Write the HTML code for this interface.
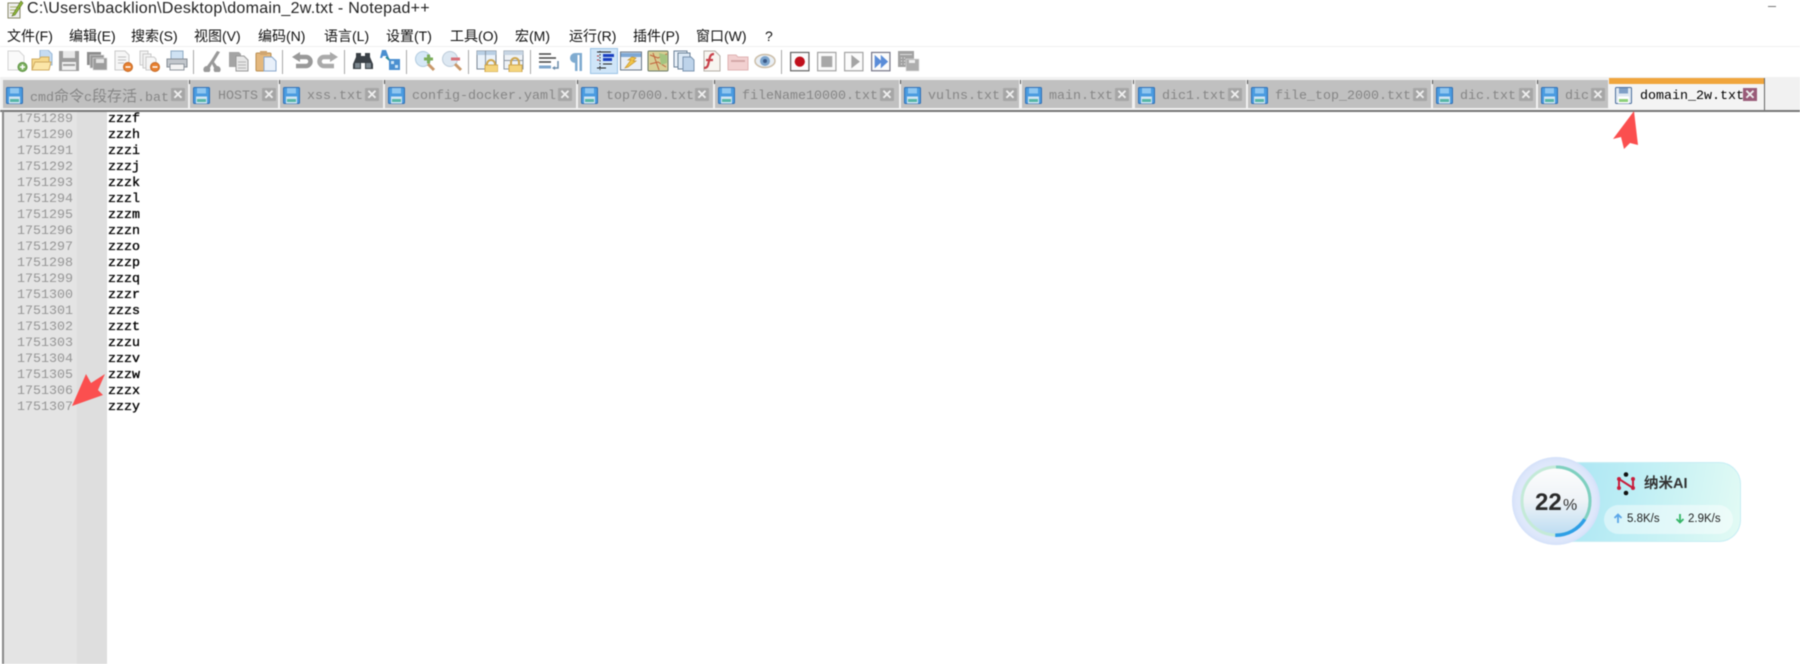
<!DOCTYPE html>
<html><head><meta charset="utf-8"><style>
html,body{margin:0;padding:0;background:#fff}
body{width:1800px;height:664px;overflow:hidden;position:relative;font-family:"Liberation Sans","Noto Sans CJK SC",sans-serif}
#w{position:absolute;left:0;top:0;width:1800px;height:664px;overflow:hidden;filter:blur(.5px)}
.a{position:absolute;white-space:nowrap}
.m{position:absolute;top:27px;font-size:14px;line-height:18px;color:#111;white-space:nowrap}
.t{position:absolute;top:80px;height:28px;background:#c0c0c0}
.t:after{content:"";position:absolute;right:-2px;top:0;width:1px;height:4px;background:#555}
.t svg{position:absolute;left:3px;top:7px;width:17px;height:17px}
.t b{position:absolute;top:8px;font:400 13.33px/18px "Liberation Mono","Noto Sans CJK SC",monospace;color:#868686;white-space:nowrap}
.t b i{font-style:normal;font-size:15px;font-family:"Noto Sans CJK SC",sans-serif}
.t u{position:absolute;top:8px;width:14px;height:13px;background:#a6a6a6;border-radius:1px;color:#eee;text-decoration:none;font:700 13px/13px "Liberation Sans",sans-serif;text-align:center}
.i{position:absolute;top:50px;width:22px;height:22px}
.s{position:absolute;top:50px;width:1px;height:24px;background:#a8a8a8}
.n,.c{position:absolute;font:13.33px/16px "Liberation Mono",monospace;white-space:pre}
.n{left:17px;top:112px;color:#969696}
.c{left:108px;top:112px;color:#000;-webkit-text-stroke:.35px #000}
</style></head><body><div id="w">
<svg width="0" height="0" style="position:absolute"><symbol id="fd" viewBox="0 0 17 17"><rect x=".5" y=".5" width="16" height="16" rx="1" fill="#4a9be0" stroke="#2f6fb5"/><rect x="4" y="1" width="9" height="5.5" fill="#8fc6f0"/><rect x="3" y="9.5" width="11" height="7" fill="#d0e4f2"/><rect x="4" y="12" width="9" height="3" fill="#56b6a6"/></symbol></svg>

<svg class="a" style="left:6px;top:0" width="18" height="19" viewBox="0 0 18 19"><path d="M2 3h12v15H2z" fill="#eee" stroke="#8a8a6a"/><path d="M4 7h8M4 10h8M4 13h6" stroke="#a9b06a"/><path d="M7 14L15 1l2 2-8 12-3 1z" fill="#8eb83a" stroke="#566c1e" stroke-width=".6"/></svg>
<div class="a" style="left:27px;top:0;font-size:16px;line-height:18px;color:#222;letter-spacing:.28px">C:\Users\backlion\Desktop\domain_2w.txt - Notepad++</div>
<div class="a" style="left:1768px;top:6px;width:8px;height:1px;background:#777"></div>

<div class="m" style="left:7px">文件(F)</div><div class="m" style="left:69px">编辑(E)</div><div class="m" style="left:131px">搜索(S)</div><div class="m" style="left:194px">视图(V)</div><div class="m" style="left:258px">编码(N)</div><div class="m" style="left:324px">语言(L)</div><div class="m" style="left:386px">设置(T)</div><div class="m" style="left:450px">工具(O)</div><div class="m" style="left:515px">宏(M)</div><div class="m" style="left:569px">运行(R)</div><div class="m" style="left:633px">插件(P)</div><div class="m" style="left:696px">窗口(W)</div><div class="m" style="left:765px">?</div>

<div class="a" style="left:0;top:46px;width:1800px;height:1px;background:#f0f0f0"></div>
<div class="a" style="left:0;top:77px;width:1800px;height:34px;background:#f1f1f1"></div>

<!-- toolbar -->
<svg class="i" style="left:6px" viewBox="0 0 22 22"><path d="M2 1h11l5 5v14H2z" fill="#fafafa" stroke="#d4d4d4"/><circle cx="16.5" cy="17" r="4.5" fill="#7cb060" stroke="#5a9040"/><path d="M14 17h5M16.500 14.500v5" stroke="#fff" stroke-width="1.500"/></svg>
<svg class="i" style="left:31px" viewBox="0 0 22 22"><path d="M9 0h8l4 4v11H9z" fill="#c6dcf2" stroke="#9ab9d8"/><path d="M1 9h7l2-2h8v13H1z" fill="#f6d98c" stroke="#d0ab60"/><path d="M1 20l3-8h16l-2 8z" fill="#fbe6a8" stroke="#d0ab60"/></svg>
<svg class="i" style="left:58px" viewBox="0 0 22 22"><rect x="1" y="1" width="20" height="20" fill="#9c9c9c"/><rect x="5" y="1" width="12" height="7" fill="#e8e8e8"/><rect x="4" y="12" width="14" height="8" fill="#f0f0f0"/><rect x="5" y="14" width="12" height="2" fill="#a0a0a0"/></svg>
<svg class="i" style="left:86px" viewBox="0 0 22 22"><rect x="1" y="2" width="14" height="13" fill="#8c8c8c"/><rect x="4" y="5" width="14" height="13" fill="#989898" stroke="#ddd" stroke-width=".6"/><rect x="7" y="8" width="14" height="12" fill="#9c9c9c" stroke="#ddd" stroke-width=".6"/><rect x="10" y="9" width="8" height="4" fill="#e4e4e4"/></svg>
<svg class="i" style="left:113px" viewBox="0 0 22 22"><path d="M2 1h10l4 4v15H2z" fill="#f6f6f6" stroke="#cacaca"/><path d="M5 7h8M5 10h8M5 13h6" stroke="#c0c0c0"/><circle cx="15" cy="17" r="4.500" fill="#e8802f" stroke="#c46a28"/><path d="M12.500 17h5" stroke="#fff" stroke-width="1.500"/></svg>
<svg class="i" style="left:139px" viewBox="0 0 22 22"><path d="M1 1h8v14H1z" fill="#f2f2f2" stroke="#cacaca"/><path d="M4 4h8v14H4z" fill="#f2f2f2" stroke="#cacaca"/><path d="M7 7h8l2 2v11H7z" fill="#f6f6f6" stroke="#cacaca"/><circle cx="16" cy="17" r="4.500" fill="#e8802f" stroke="#c46a28"/><path d="M13.500 17h5" stroke="#fff" stroke-width="1.500"/></svg>
<svg class="i" style="left:166px" viewBox="0 0 22 22"><rect x="5" y="1" width="12" height="9" fill="#cfe2f3" stroke="#8fabc4"/><path d="M1 9h20v8H1z" fill="#c2c7cc" stroke="#868d95"/><rect x="4" y="14" width="14" height="6" fill="#f4f4f4" stroke="#8f969e"/></svg>
<div class="s" style="left:193px"></div>
<svg class="i" style="left:202px" viewBox="0 0 22 22"><path d="M15 1l3 1-6 10 3 4a3.500 3.500 0 1 1-3 2l-2-4-2 4a3.500 3.500 0 1 1-3-2l3-4 2-3z" fill="#999"/></svg>
<svg class="i" style="left:228px" viewBox="0 0 22 22"><path d="M1 2h10l2 2v13H1z" fill="#a4a4a4"/><path d="M8 6h8l4 4v11H8z" fill="#e6e6e6" stroke="#999"/><path d="M10 12h8M10 15h8M10 18h8" stroke="#b4b4b4"/></svg>
<svg class="i" style="left:255px" viewBox="0 0 22 22"><rect x="1" y="3" width="15" height="18" rx="1" fill="#e4b87e" stroke="#b98e50"/><rect x="5" y="1" width="7" height="4" fill="#d0a570"/><path d="M9 7h8l4 4v10H9z" fill="#e8f0fa" stroke="#8aa8cc"/></svg>
<div class="s" style="left:282px"></div>
<svg class="i" style="left:291px" viewBox="0 0 22 22"><path d="M8 7h7a4.500 4.500 0 0 1 0 9H5" fill="none" stroke="#999" stroke-width="4.500"/><path d="M1 7l8-5v10z" fill="#999"/></svg>
<svg class="i" style="left:317px" viewBox="0 0 22 22"><path d="M14 7H7a4.500 4.500 0 0 0 0 9h10" fill="none" stroke="#aaa" stroke-width="4.500"/><path d="M21 7l-8-5v10z" fill="#aaa"/></svg>
<div class="s" style="left:344px"></div>
<svg class="i" style="left:352px" viewBox="0 0 22 22"><path d="M4 3h5v3h4V3h5v4l3 7v5h-8v-6H9v6H1v-5l3-7z" fill="#3a4046"/><rect x="3" y="13" width="5" height="5" fill="#7d8890"/><rect x="14" y="13" width="5" height="5" fill="#7d8890"/></svg>
<svg class="i" style="left:379px;top:49px" viewBox="0 0 22 22"><path d="M3 1h4l3 8H8L7 7H4L3 9H1z" fill="#4a8fd0"/><path d="M7 8l6 5" stroke="#2a8a95" stroke-width="2"/><rect x="10" y="10" width="11" height="11" fill="#4a8fd0"/><rect x="12" y="12" width="3" height="3" fill="#cfe6f7"/><rect x="16" y="16" width="3" height="3" fill="#cfe6f7"/></svg>
<div class="s" style="left:406px"></div>
<svg class="i" style="left:414px" viewBox="0 0 22 22"><circle cx="9" cy="9" r="7.500" fill="#d6e8f6" stroke="#b0cade"/><path d="M14 14l6 6" stroke="#c8986a" stroke-width="3"/><path d="M10 9h9M14.500 4.500v9" stroke="#7cae5a" stroke-width="3"/></svg>
<svg class="i" style="left:441px" viewBox="0 0 22 22"><circle cx="9" cy="9" r="7.500" fill="#dde8f2" stroke="#bccbd9"/><path d="M14 14l6 6" stroke="#c8986a" stroke-width="3"/><path d="M10 9h9" stroke="#d8707a" stroke-width="3"/></svg>
<div class="s" style="left:468px"></div>
<svg class="i" style="left:476px" viewBox="0 0 22 22"><rect x="1" y="1" width="19" height="18" fill="#eaf2fa" stroke="#7a8794"/><rect x="1" y="1" width="19" height="4" fill="#b9cfe4"/><rect x="9" y="1" width="1" height="18" fill="#8a97a4"/><path d="M11 17v-3a4 4 0 0 1 8 0v3" fill="none" stroke="#cfa64c" stroke-width="2"/><rect x="9" y="15" width="13" height="7" fill="#f4d47c" stroke="#cfa64c"/></svg>
<svg class="i" style="left:503px" viewBox="0 0 22 22"><rect x="1" y="1" width="19" height="18" fill="#eef2f6" stroke="#8a96a2"/><rect x="1" y="1" width="19" height="4" fill="#c7d5e3"/><rect x="1" y="10" width="19" height="1" fill="#8a96a2"/><path d="M8 15v-3a4 4 0 0 1 8 0v3" fill="none" stroke="#cfa64c" stroke-width="2"/><rect x="6" y="15" width="13" height="7" fill="#f4d47c" stroke="#cfa64c"/></svg>
<div class="s" style="left:530px"></div>
<svg class="i" style="left:538px" viewBox="0 0 22 22"><path d="M1 4h12M1 8h17M1 12h12" stroke="#444" stroke-width="1.500"/><path d="M1 17h12" stroke="#7fa6cc" stroke-width="3"/><path d="M20 11v7h-5" fill="none" stroke="#6c8dab" stroke-width="1.500"/><path d="M14 18l3-2v4z" fill="#6c8dab"/></svg>
<svg class="i" style="left:566px" viewBox="0 0 22 22"><path d="M16 3H9a5 5 0 0 0 0 10v8h2.500V5h2v16H16z" fill="#7fabd0"/></svg>
<div class="a" style="left:590px;top:48px;width:26px;height:24px;background:#cfe5f8;border:1px solid #9cc4e6"></div>
<svg class="i" style="left:594px;top:49px" viewBox="0 0 22 22"><path d="M6 2v19" stroke="#333" stroke-dasharray="1.500 1.500"/><path d="M3 3h14M3 19h9M9 15h9" stroke="#222"/><rect x="9" y="5" width="11" height="3" fill="#1a3fc0"/><rect x="9" y="9" width="9" height="3" fill="#1a3fc0"/><path d="M3 7h2M3 11h2" stroke="#b03030"/></svg>
<svg class="i" style="left:620px" viewBox="0 0 22 22"><rect x=".5" y="2" width="21" height="18" fill="#e9eef5" stroke="#6a7886"/><rect x="1" y="3" width="20" height="4" fill="#7fa8d4"/><path d="M5 18l6-8h-3l4-3 4 1-3 3h3l-8 6z" fill="#f2c648" stroke="#c8932a" stroke-width=".7"/></svg>
<svg class="i" style="left:647px" viewBox="0 0 22 22"><rect x="1" y="1" width="20" height="20" rx="1" fill="#d8cf94" stroke="#6a7a66"/><path d="M3 5l8 3 9-4M6 3l6 17M3 14l8-2 8 5" stroke="#c0603a" fill="none"/><path d="M12 3l8 2v8l-6 2z" fill="#a4c480"/></svg>
<svg class="i" style="left:673px" viewBox="0 0 22 22"><rect x="1" y="1" width="13" height="16" fill="#e9f1f9" stroke="#6b8198"/><rect x="5" y="3" width="12" height="16" fill="#dbe8f5" stroke="#6b8198"/><path d="M10 7h8l3 3v11H10z" fill="#bdd3ea" stroke="#7a94b0"/></svg>
<svg class="i" style="left:700px" viewBox="0 0 22 22"><path d="M4 1h11l5 5v15H4z" fill="#f8f5f0" stroke="#b4aea6"/><path d="M14 4c-4 0-4 3-5 7s-1 7-5 7M6 10h7" fill="none" stroke="#c8404a" stroke-width="2.200"/></svg>
<svg class="i" style="left:727px" viewBox="0 0 22 22"><path d="M1 5h8l2 2h10v13H1z" fill="#f2d0d0" stroke="#dfb4b4"/><path d="M4 11h14" stroke="#d4a8a8" stroke-width="2"/></svg>
<svg class="i" style="left:754px" viewBox="0 0 22 22"><ellipse cx="11" cy="11" rx="10" ry="6.500" fill="#e8eef4" stroke="#ccbea8" stroke-width="1.500"/><circle cx="11" cy="11" r="5" fill="#7ca4cc"/><circle cx="11" cy="11" r="2" fill="#3a5a88"/></svg>
<div class="s" style="left:781px"></div>
<svg class="i" style="left:790px" viewBox="0 0 18 18"><rect x=".5" y="2" width="15" height="15" fill="#fbfbfb" stroke="#666"/><circle cx="8" cy="9.500" r="4.200" fill="#c0101c"/></svg>
<svg class="i" style="left:817px" viewBox="0 0 18 18"><rect x=".5" y="2" width="15" height="15" fill="#fbfbfb" stroke="#a4a4a4"/><rect x="3.500" y="5" width="9" height="9" fill="#a8a8a8"/></svg>
<svg class="i" style="left:844px" viewBox="0 0 18 18"><rect x=".5" y="2" width="15" height="15" fill="#fbfbfb" stroke="#a4a4a4"/><path d="M6 4l7 5.500-7 5.500z" fill="#a4a4a4"/></svg>
<svg class="i" style="left:871px" viewBox="0 0 18 18"><rect x=".5" y="2" width="15" height="15" fill="#fbfbfb" stroke="#778"/><path d="M3 4l6 5.500-6 5.500zM8 4l6 5.500-6 5.500z" fill="#5a8cd8"/></svg>
<svg class="i" style="left:897px;width:23px" viewBox="0 0 23 22"><rect x="1" y="1" width="16" height="16" fill="#a2a2a2"/><rect x="3" y="4" width="12" height="1" fill="#ddd"/><path d="M4 8h1M7 8h1M4 11h1M7 11h1M4 14h1M7 14h1" stroke="#eee"/><rect x="9" y="9" width="13" height="12" fill="#aeaeae" stroke="#ddd" stroke-width=".6"/><rect x="12" y="10" width="6" height="3" fill="#eee"/></svg>

<!-- tabs -->
<div class="t" style="left:3px;width:185px"><svg><use href="#fd"/></svg><b style="left:27px;top:7px">cmd<i>命令</i>c<i>段存活</i>.bat</b><u style="left:168px">✕</u></div>
<div class="t" style="left:190px;width:88px"><svg><use href="#fd"/></svg><b style="left:28px">HOSTS</b><u style="left:72px">✕</u></div>
<div class="t" style="left:280px;width:103px"><svg><use href="#fd"/></svg><b style="left:27px">xss.txt</b><u style="left:85px">✕</u></div>
<div class="t" style="left:385px;width:191px"><svg><use href="#fd"/></svg><b style="left:27px">config-docker.yaml</b><u style="left:173px">✕</u></div>
<div class="t" style="left:578px;width:135px"><svg><use href="#fd"/></svg><b style="left:28px">top7000.txt</b><u style="left:117px">✕</u></div>
<div class="t" style="left:715px;width:184px"><svg><use href="#fd"/></svg><b style="left:27px">fileName10000.txt</b><u style="left:165px">✕</u></div>
<div class="t" style="left:901px;width:118px"><svg><use href="#fd"/></svg><b style="left:27px">vulns.txt</b><u style="left:102px">✕</u></div>
<div class="t" style="left:1022px;width:110px"><svg><use href="#fd"/></svg><b style="left:27px">main.txt</b><u style="left:93px">✕</u></div>
<div class="t" style="left:1135px;width:111px"><svg><use href="#fd"/></svg><b style="left:27px">dic1.txt</b><u style="left:93px">✕</u></div>
<div class="t" style="left:1248px;width:183px"><svg><use href="#fd"/></svg><b style="left:27px">file_top_2000.txt</b><u style="left:165px">✕</u></div>
<div class="t" style="left:1433px;width:103px"><svg><use href="#fd"/></svg><b style="left:27px">dic.txt</b><u style="left:86px">✕</u></div>
<div class="t" style="left:1538px;width:70px"><svg><use href="#fd"/></svg><b style="left:27px">dic</b><u style="left:53px">✕</u></div>
<div class="a" style="left:1609px;top:78px;width:155px;height:32px;background:#f4f4f4;border-right:1px solid #666;box-sizing:content-box">
 <div class="a" style="left:0;top:0;width:155px;height:6px;background:#f0a53c"></div>
 <svg class="a" style="left:6px;top:9px" width="17" height="17" viewBox="0 0 17 17"><rect x=".5" y=".5" width="16" height="16" rx="1" fill="#dfe8f2" stroke="#4d6f9c"/><rect x="4" y="1" width="9" height="5.500" fill="#7f9fc6"/><rect x="3" y="9.500" width="11" height="7" fill="#fff"/><rect x="4" y="12" width="9" height="3" fill="#8ed07a"/></svg>
 <span class="a" style="left:31px;top:10px;font:13.33px/18px 'Liberation Mono',monospace;color:#000">domain_2w.txt</span>
 <span class="a" style="left:134px;top:10px;width:14px;height:13px;background:#995b78;color:#eee;font:700 13px/13px 'Liberation Sans',sans-serif;text-align:center">✕</span>
</div>
<div class="a" style="left:0;top:110px;width:1800px;height:2px;background:#777"></div>

<!-- editor -->
<div class="a" style="left:2px;top:111px;width:2px;height:553px;background:#888"></div>
<div class="a" style="left:4px;top:112px;width:73px;height:552px;background:#e4e4e4"></div>
<div class="a" style="left:77px;top:112px;width:30px;height:552px;background:#dedede"></div>
<div class="n">1751289
1751290
1751291
1751292
1751293
1751294
1751295
1751296
1751297
1751298
1751299
1751300
1751301
1751302
1751303
1751304
1751305
1751306
1751307</div>
<div class="c">zzzf
zzzh
zzzi
zzzj
zzzk
zzzl
zzzm
zzzn
zzzo
zzzp
zzzq
zzzr
zzzs
zzzt
zzzu
zzzv
zzzw
zzzx
zzzy</div>

<!-- arrows -->
<svg class="a" style="left:0;top:0" width="1800" height="664"><polygon points="1634,111 1613,139 1621,137 1624,149 1630,143 1638,145" fill="#fb4f4f"/><polygon points="72,406 86,374 91,383 105,374 98,390 103,395" fill="#fb4f4f"/></svg>

<!-- widget -->
<div class="a" style="left:1540px;top:462px;width:201px;height:80px;border-radius:22px;background:linear-gradient(100deg,#a4e2f3 0%,#bdeef5 45%,#e3fbf4 100%);box-shadow:inset 0 0 0 1px #c8eef5"></div>
<div class="a" style="left:1604px;top:505px;width:129px;height:29px;border-radius:15px;background:rgba(255,255,255,.45)"></div>
<div class="a" style="left:1512px;top:457px;width:88px;height:88px;border-radius:50%;background:#dfe8fb;box-shadow:inset 0 0 6px #c9d9f7"></div>
<div class="a" style="left:1522px;top:467px;width:68px;height:68px;border-radius:50%;background:linear-gradient(180deg,#fdfdfd 0%,#eef3f7 50%,#bcdcf2 100%)"></div>
<svg class="a" style="left:1518px;top:463px" width="76" height="76" viewBox="0 0 76 76"><circle cx="38" cy="38" r="34" fill="none" stroke="#c4ead8" stroke-width="3"/><path d="M38 4a34 34 0 0 1 0 68" fill="none" stroke="#7fd0c0" stroke-width="3"/><path d="M69 52a34 34 0 0 1-27 20" fill="none" stroke="#2f9fe6" stroke-width="3.500" transform="rotate(8 38 38)"/></svg>
<div class="a" style="left:1535px;top:489px;font:700 24px/28px 'Liberation Sans',sans-serif;color:#2b2b2b">22</div>
<div class="a" style="left:1563px;top:495px;font:400 16px/22px 'Liberation Sans',sans-serif;color:#333">%</div>
<svg class="a" style="left:1616px;top:472px" width="20" height="24" viewBox="0 0 20 24"><path d="M3 7v9M3 7l14 9M17 7v9" stroke="#c81e3c" stroke-width="2" fill="none"/><circle cx="3" cy="7" r="2" fill="#c81e3c"/><circle cx="3" cy="16" r="2" fill="#c81e3c"/><circle cx="17" cy="7" r="2" fill="#c81e3c"/><circle cx="17" cy="16" r="2" fill="#c81e3c"/><circle cx="10" cy="2.500" r="2.300" fill="#111"/><circle cx="10" cy="21" r="2.300" fill="#111"/></svg>
<div class="a" style="left:1644px;top:474px;font:700 14.5px/20px 'Liberation Sans','Noto Sans CJK SC',sans-serif;color:#333">纳米AI</div>
<svg class="a" style="left:1613px;top:513px" width="10" height="11" viewBox="0 0 10 11"><path d="M5 10V2M1.500 5L5 1.500 8.500 5" fill="none" stroke="#5ba6e8" stroke-width="1.800"/></svg>
<div class="a" style="left:1627px;top:511px;font:11.5px/16px 'Liberation Sans',sans-serif;color:#222">5.8K/s</div>
<svg class="a" style="left:1675px;top:513px" width="10" height="11" viewBox="0 0 10 11"><path d="M5 1v8M1.500 6L5 9.500 8.500 6" fill="none" stroke="#35b567" stroke-width="1.800"/></svg>
<div class="a" style="left:1688px;top:511px;font:11.5px/16px 'Liberation Sans',sans-serif;color:#222">2.9K/s</div>
</div></body></html>
